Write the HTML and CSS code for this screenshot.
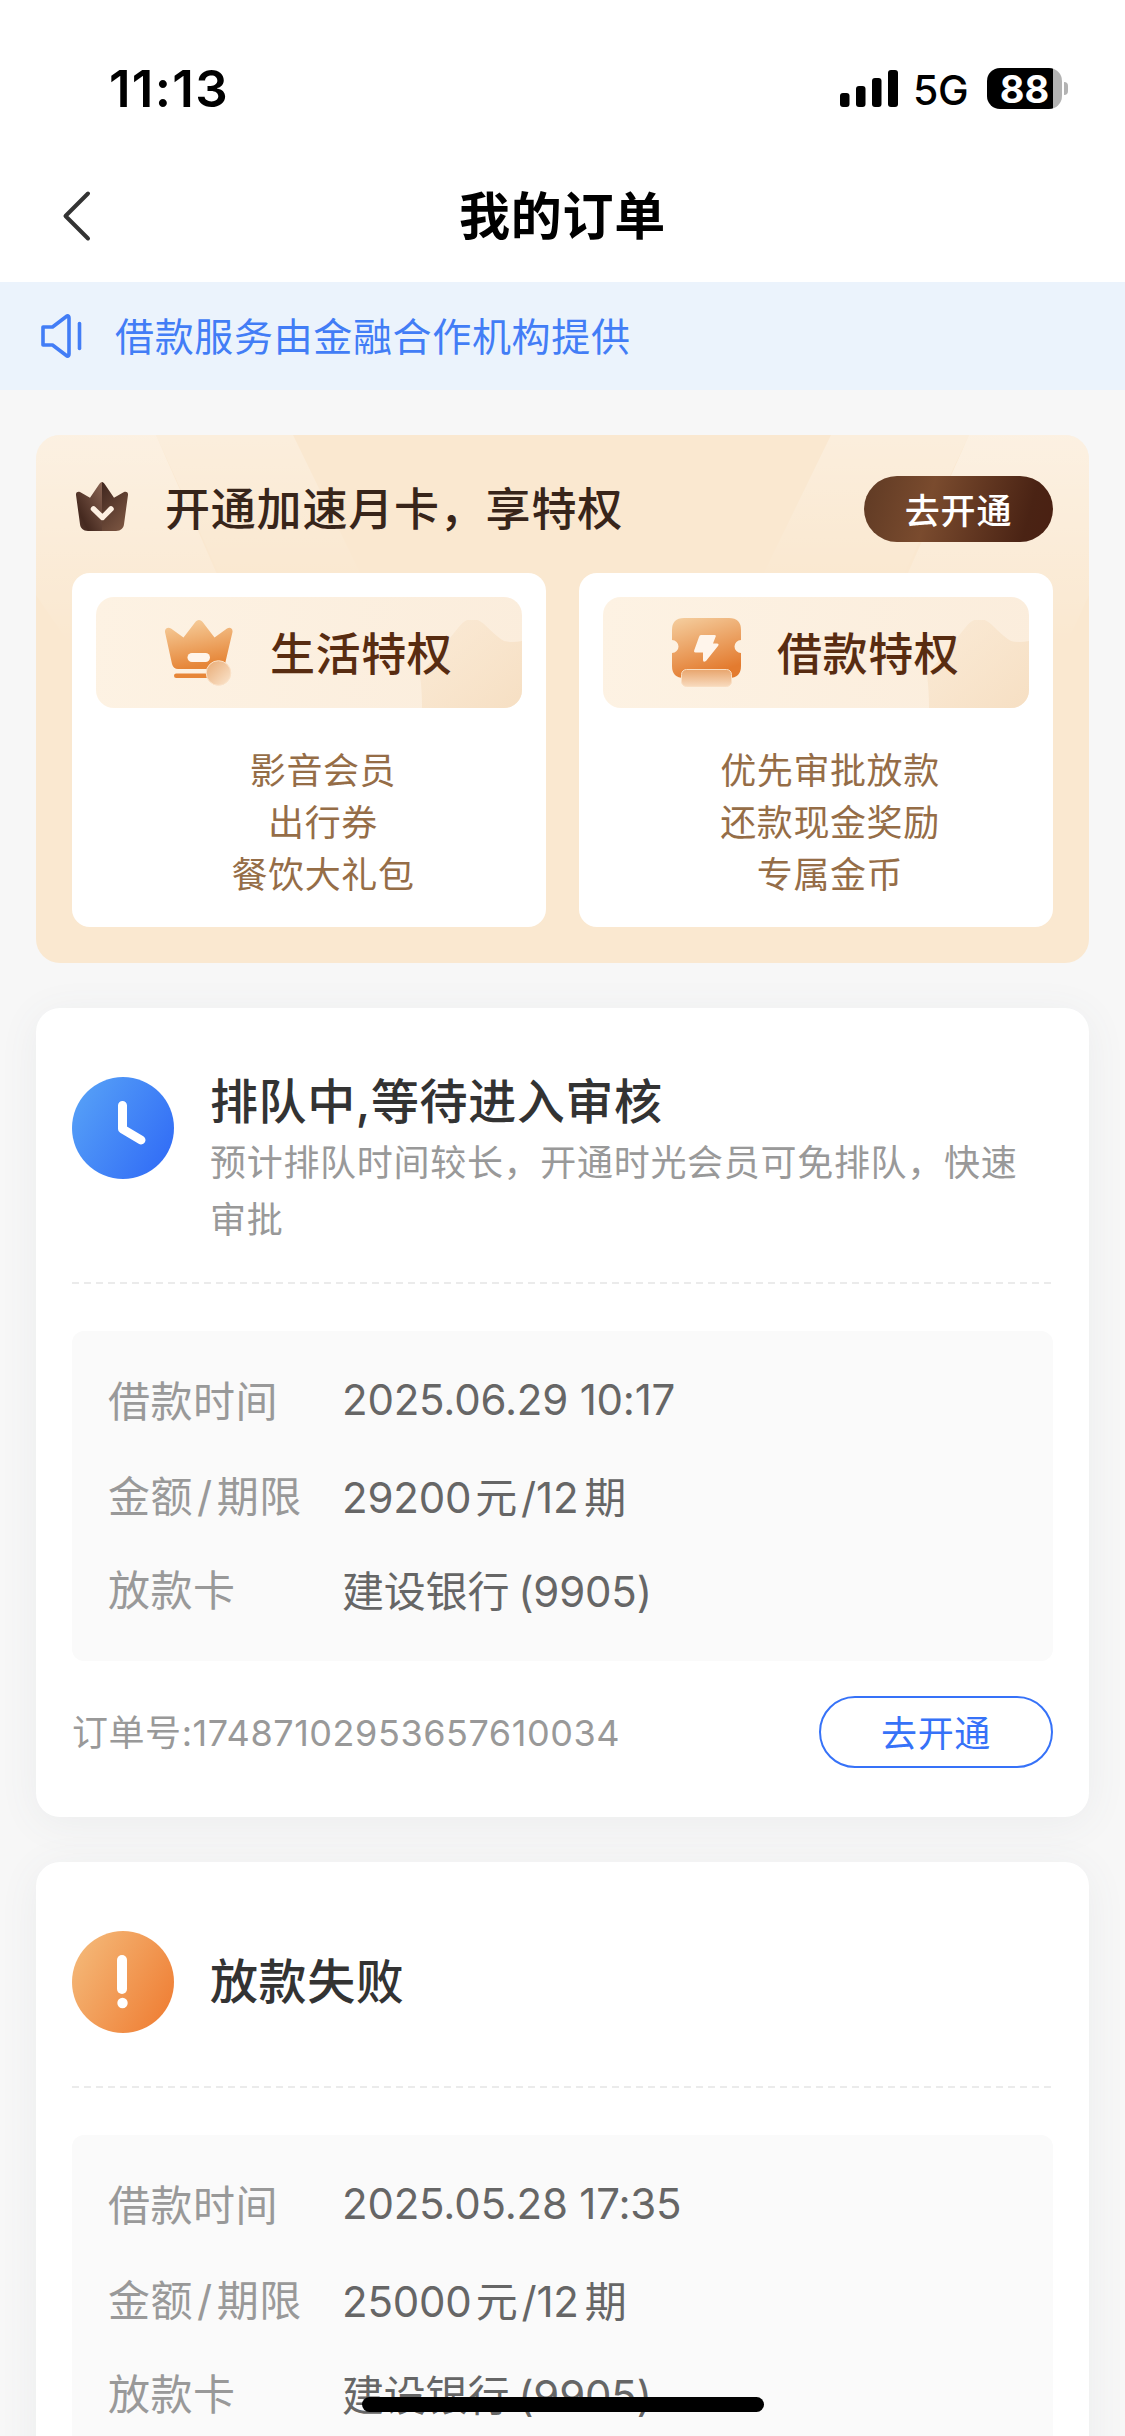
FILE: index.html
```html
<!DOCTYPE html>
<html lang="zh-CN">
<head>
<meta charset="utf-8">
<title>我的订单</title>
<link rel="stylesheet" href="styles.css">
</head>
<body>
<div class="screen">
  <header class="status">
    <span class="time">11:13</span>
    <div class="indicators">
      <svg class="signal" width="58" height="37" viewBox="0 0 58 37"><rect y="23" width="9.5" height="14" rx="3"/><rect x="16" y="16" width="9.5" height="21" rx="3"/><rect x="32" y="8" width="9.5" height="29" rx="3"/><rect x="48" width="10" height="37" rx="3"/></svg>
      <span class="network">5G</span>
      <div class="battery"><span class="level">88</span><span class="nub"></span></div>
    </div>
  </header>

  <nav class="nav">
    <svg class="back" width="32" height="54" viewBox="0 0 32 54"><path d="M28 4.500 5.500 27 28 49.500"/></svg>
    <h1 class="nav-title">我的订单</h1>
  </nav>

  <div class="notice">
    <svg class="speaker" width="44" height="48" viewBox="0 0 44 48"><path d="M3 15H12.500L27 4Q29 3.500 29 6V42Q29 44.500 27 44L12.500 33H3Z"/><path d="M39.500 11.500V36.500"/></svg>
    <span class="notice-text">借款服务由金融合作机构提供</span>
  </div>

  <main class="content">
    <section class="promo">
      <svg class="rays" viewBox="0 0 1053 528" preserveAspectRatio="none">
        <defs>
          <linearGradient id="ray" x1="0" y1="0" x2="0" y2="1"><stop offset="0" stop-color="#fff" stop-opacity=".38"/><stop offset="1" stop-color="#fff" stop-opacity="0"/></linearGradient>
        </defs>
        <path fill="url(#ray)" d="M0 0H120L212 210H34L0 160Z"/>
        <path fill="url(#ray)" opacity=".7" d="M120 0H257L330 150H188Z"/>
        <path fill="url(#ray)" opacity=".7" d="M795 0H933L863 150H722Z"/>
        <path fill="url(#ray)" d="M933 0H1053V160L1030 210H840Z"/>
      </svg>
      <div class="promo-head">
        <svg class="promo-crown" width="52" height="49" viewBox="0 0 52 51" preserveAspectRatio="none">
          <defs>
            <linearGradient id="cl" x1="1" y1="0" x2="0" y2="1"><stop offset="0" stop-color="#8a6453"/><stop offset=".75" stop-color="#45291f"/><stop offset="1" stop-color="#5a3b30"/></linearGradient>
            <linearGradient id="cr" x1="0" y1="0" x2=".6" y2="1"><stop offset="0" stop-color="#3f261e"/><stop offset="1" stop-color="#77523f"/></linearGradient>
          </defs>
          <path fill="url(#cl)" d="M26 0C25 0 24 1 23 2.500L14 16.500 4 10.500C2 9.500-.300 10.500 0 13.500L4 44C4.500 48 7 51 12 51H26Z"/>
          <path fill="url(#cr)" d="M26 0C27 0 28 1 29 2.500L38 16.500 48 10.500C50 9.500 52.300 10.500 52 13.500L48 44C47.500 48 45 51 40 51H26Z"/>
          <path d="M17.500 28 26.500 37 35 28" fill="none" stroke="#fdf0e2" stroke-width="5.500" stroke-linecap="round" stroke-linejoin="round"/>
        </svg>
        <h2 class="promo-title">开通加速月卡，享特权</h2>
        <button class="promo-button">去开通</button>
      </div>
      <div class="perks">
        <article class="perk">
          <div class="perk-head">
            <svg class="hill" width="102" height="88" viewBox="0 0 102 88"><defs><linearGradient id="h1" x1="0" y1="0" x2="1" y2="1"><stop offset="0" stop-color="#f9e5cc" stop-opacity=".5"/><stop offset="1" stop-color="#f6dfc3"/></linearGradient></defs><path fill="url(#h1)" d="M0 55Q22 28 38 8Q50-8 64 4Q78 18 84 21Q92 23 102 21V88H2Q2 70 0 55Z"/></svg>
            <svg class="perk-icon" width="69" height="66" viewBox="0 0 69 66">
              <defs>
                <linearGradient id="g1" x1="0" y1="0" x2=".25" y2="1"><stop offset="0" stop-color="#f7d2a2"/><stop offset="1" stop-color="#e68638"/></linearGradient>
                <linearGradient id="g2" x1="0" y1="0" x2="1" y2="1"><stop offset="0" stop-color="#e8aa73"/><stop offset="1" stop-color="#fbe6cf"/></linearGradient>
              </defs>
              <path fill="url(#g1)" d="M34 0C32.500 0 31 1 30 2.500L18.500 17.500 6 8.500C3 6.500-.500 8.500 0 12L7 44C8 47.500 10 49 13 49H54C57 49 59 47.500 60 44L67.500 12C68 8.500 65 6.500 62 8.500L49.500 17.500 38 2.500C37 1 35.500 0 34 0Z"/>
              <rect x="22.500" y="33" width="22.500" height="9" rx="4.500" fill="#fff5eb"/>
              <rect x="9" y="53.500" width="40" height="4.500" rx="2.200" fill="#e78638"/>
              <circle cx="53.500" cy="53" r="12.300" fill="url(#g2)" stroke="#fae1c7"/>
            </svg>
            <h3 class="perk-title">生活特权</h3>
          </div>
          <ul class="perk-list"><li>影音会员</li><li>出行券</li><li>餐饮大礼包</li></ul>
        </article>
        <article class="perk">
          <div class="perk-head">
            <svg class="hill" width="102" height="88" viewBox="0 0 102 88"><path fill="url(#h1)" d="M0 55Q22 28 38 8Q50-8 64 4Q78 18 84 21Q92 23 102 21V88H2Q2 70 0 55Z"/></svg>
            <svg class="perk-icon" width="69" height="69" viewBox="0 0 69 69">
              <defs>
                <linearGradient id="g3" x1="0" y1="0" x2=".35" y2="1"><stop offset="0" stop-color="#f5cfa0"/><stop offset="1" stop-color="#e37b2f"/></linearGradient>
                <linearGradient id="g4" x1="0" y1="0" x2="0" y2="1"><stop offset="0" stop-color="#e8a56d"/><stop offset="1" stop-color="#f8dabd"/></linearGradient>
              </defs>
              <path fill="url(#g3)" d="M12 0H57Q69 0 69 12V22A6.500 6.500 0 0 0 69 35V48Q69 60 57 60H12Q0 60 0 48V35A6.500 6.500 0 0 0 0 22V12Q0 0 12 0Z"/>
              <path fill="#fff5eb" d="M29 17H42.500Q44.500 17 43.500 19L41 25.500H45Q47.500 25.500 46 28L34 43Q31 45 31 42V34.500H23.500Q21.500 34.500 22.300 32L27 19Q27.500 17 29 17Z"/>
              <rect x="9.500" y="51.500" width="50" height="17" rx="5" fill="url(#g4)" stroke="#f9dec2"/>
            </svg>
            <h3 class="perk-title">借款特权</h3>
          </div>
          <ul class="perk-list"><li>优先审批放款</li><li>还款现金奖励</li><li>专属金币</li></ul>
        </article>
      </div>
    </section>

    <section class="order">
      <div class="order-head">
        <svg class="order-icon" width="102" height="102" viewBox="0 0 102 102"><defs><linearGradient id="blue" x1="0" y1=".2" x2="1" y2=".8"><stop offset="0" stop-color="#56a0f7"/><stop offset="1" stop-color="#316cf6"/></linearGradient></defs><circle cx="51" cy="51" r="51" fill="url(#blue)"/><path d="M50.500 28.500V52L69 63" fill="none" stroke="#fff" stroke-width="9" stroke-linecap="round" stroke-linejoin="round"/></svg>
        <div class="order-heading">
          <h2 class="order-title">排队中,等待进入审核</h2>
          <p class="order-note">预计排队时间较长，开通时光会员可免排队，快速审批</p>
        </div>
      </div>
      <svg class="divider" width="981" height="2"><path d="M0 1H981"/></svg>
      <dl class="details">
        <div class="row"><dt>借款时间</dt><dd>2025.06.29 10:17</dd></div>
        <div class="row"><dt>金额<span class="gap">/</span>期限</dt><dd>29200<span class="gap">元</span>/12<span class="unit">期</span></dd></div>
        <div class="row"><dt>放款卡</dt><dd>建设银行<span class="lead">(9905)</span></dd></div>
      </dl>
      <div class="order-foot"><span class="order-no">订单号:17487102953657610034</span><button class="order-button">去开通</button></div>
    </section>

    <section class="order">
      <div class="order-head short">
        <svg class="order-icon" width="102" height="102" viewBox="0 0 102 102"><defs><linearGradient id="orange" x1="0" y1=".2" x2="1" y2=".8"><stop offset="0" stop-color="#f4b878"/><stop offset="1" stop-color="#ef7e34"/></linearGradient></defs><circle cx="51" cy="51" r="51" fill="url(#orange)"/><path d="M50 29V58" fill="none" stroke="#fff" stroke-width="10" stroke-linecap="round"/><circle cx="50.500" cy="72" r="5.200" fill="#fff"/></svg>
        <div class="order-heading"><h2 class="order-title">放款失败</h2></div>
      </div>
      <svg class="divider" width="981" height="2"><path d="M0 1H981"/></svg>
      <dl class="details">
        <div class="row"><dt>借款时间</dt><dd>2025.05.28 17:35</dd></div>
        <div class="row"><dt>金额<span class="gap">/</span>期限</dt><dd>25000<span class="gap">元</span>/12<span class="unit">期</span></dd></div>
        <div class="row"><dt>放款卡</dt><dd>建设银行<span class="lead">(9905)</span></dd></div>
      </dl>
    </section>
  </main>
  <div class="home-bar"></div>
</div>
</body>
</html>
```
FILE: styles.css
```css
* { box-sizing: border-box; margin: 0; padding: 0; }
body { width: 1125px; height: 2436px; overflow: hidden; font-family: Inter, "Noto Sans CJK SC", sans-serif; background: #f7f7f7; }
svg { display: block; flex: none; }
ul { list-style: none; }
button { border: 0; background: none; font: inherit; }
h1, h2, h3 { font-weight: 500; white-space: nowrap; }
.screen { position: relative; height: 2436px; overflow: hidden; }

.status { display: flex; justify-content: space-between; height: 176px; padding: 58px 57px 0 109px; background: #fff; }
.time { font-size: 51px; line-height: 61px; font-weight: 600; letter-spacing: 1.3px; }
.indicators { display: flex; align-items: flex-start; }
.signal { margin-top: 12px; }
.network { width: 56px; margin: 7px 18px 0 15px; font-size: 41px; line-height: 50px; font-weight: 450; letter-spacing: -.3px; }
.battery { position: relative; width: 75px; height: 41px; margin: 10px 6px 0 0; border-radius: 13px; background: linear-gradient(90deg, #000 66px, #b3b3b3 66px); }
.level { display: block; width: 75px; font-size: 38px; line-height: 42px; font-weight: 700; color: #fff; text-align: center; }
.nub { position: absolute; left: 77px; top: 14px; width: 4px; height: 13px; border-radius: 0 4px 4px 0; background: #b3b3b3; }

.nav { display: grid; grid-template-columns: 120px 1fr 120px; align-items: center; height: 106px; padding-bottom: 27px; background: #fff; }
.back { margin-left: 60px; fill: none; stroke: #333; stroke-width: 4; stroke-linecap: round; stroke-linejoin: round; }
.nav-title { padding-top: 2px; font-size: 51px; line-height: 76px; letter-spacing: .8px; text-align: center; font-weight: 600; }

.notice { display: flex; align-items: center; gap: 31px; height: 108px; padding-left: 40px; background: #ebf3fc; color: #427df6; font-size: 39px; letter-spacing: .66px; }
.notice-text { padding-bottom: 4px; }
.speaker { fill: none; stroke: #427df6; stroke-width: 3.6; stroke-linejoin: round; stroke-linecap: round; }

.content { display: flex; flex-direction: column; gap: 45px; padding: 45px 36px 0; }
.promo { position: relative; height: 528px; padding: 0 36px; border-radius: 24px; overflow: hidden; background: #fae8d0; }
.rays { position: absolute; inset: 0; width: 1053px; height: 528px; }
.promo-head { position: relative; display: flex; align-items: center; height: 138px; padding-top: 5px; }
.promo-crown { margin: 0 37px 0 4px; }
.promo-title { flex: 1; font-size: 45px; letter-spacing: .8px; color: #38251a; }
.promo-button { width: 189px; height: 66px; margin-top: 5px; padding-bottom: 2px; border-radius: 33px; color: #fff; font-size: 35px; letter-spacing: .8px; font-weight: 500; background: linear-gradient(105deg, #5f3a24, #7a4b2e 35%, #4a2314 85%, #4a2012); }
.perks { position: relative; display: grid; grid-template-columns: 1fr 1fr; gap: 33px; }
.perk { height: 354px; padding: 24px; border-radius: 18px; background: #fff; }
.perk-head { position: relative; display: flex; align-items: center; height: 111px; padding-left: 69px; border-radius: 18px; overflow: hidden; background: linear-gradient(100deg, #fdf2e3, #fbeddc); }
.hill { position: absolute; right: 0; bottom: 0; }
.perk-icon { position: relative; }
.perk-title { position: relative; margin-left: 36px; padding-bottom: 3px; font-size: 45px; letter-spacing: .6px; color: #582c11; }
.perk-list { padding: 37px 0 0 28px; text-align: center; font-size: 36px; line-height: 52px; letter-spacing: .6px; color: #956d47; }

.order { height: 809px; padding: 0 36px; border-radius: 24px; background: #fff; box-shadow: 0 6px 40px rgba(80, 100, 120, .07); }
.order-head { display: flex; height: 274px; padding-top: 69px; }
.order-head.short { height: 224px; padding-top: 69px; }
.order-heading { margin: -13px 0 0 36px; width: 836px; }
.short .order-heading { margin-top: 13px; }
.order-title { font-size: 48px; line-height: 76px; letter-spacing: .6px; color: #333; }
.order-note { margin-top: -5px; font-size: 36px; line-height: 57px; letter-spacing: .7px; color: #999; }
.divider { stroke: #ebebeb; stroke-width: 2; stroke-dasharray: 7 5; }
.details { height: 330px; margin-top: 47px; padding: 22px 36px; border-radius: 12px; background: #fafafa; font-size: 42px; }
.row { display: flex; align-items: center; height: 94.5px; white-space: nowrap; }
dt { width: 234px; padding-bottom: 3px; color: #999; letter-spacing: .5px; }
dd { padding-bottom: 1px; color: #666; letter-spacing: -.2px; }
.gap { margin: 0 4px; }
.unit { margin-left: 6px; }
.lead { margin-left: 9px; }
.order-foot { display: flex; align-items: center; justify-content: space-between; padding-top: 35px; font-size: 36px; }
.order-no { padding-bottom: 5px; color: #999; letter-spacing: .55px; white-space: nowrap; }
.order-button { width: 234px; height: 72px; padding-bottom: 3px; border: 2px solid #3672f8; border-radius: 36px; color: #3672f8; font-size: 36px; letter-spacing: .6px; }
.home-bar { position: absolute; left: 362px; top: 2397px; width: 402px; height: 15px; border-radius: 8px; background: #000; }
```
